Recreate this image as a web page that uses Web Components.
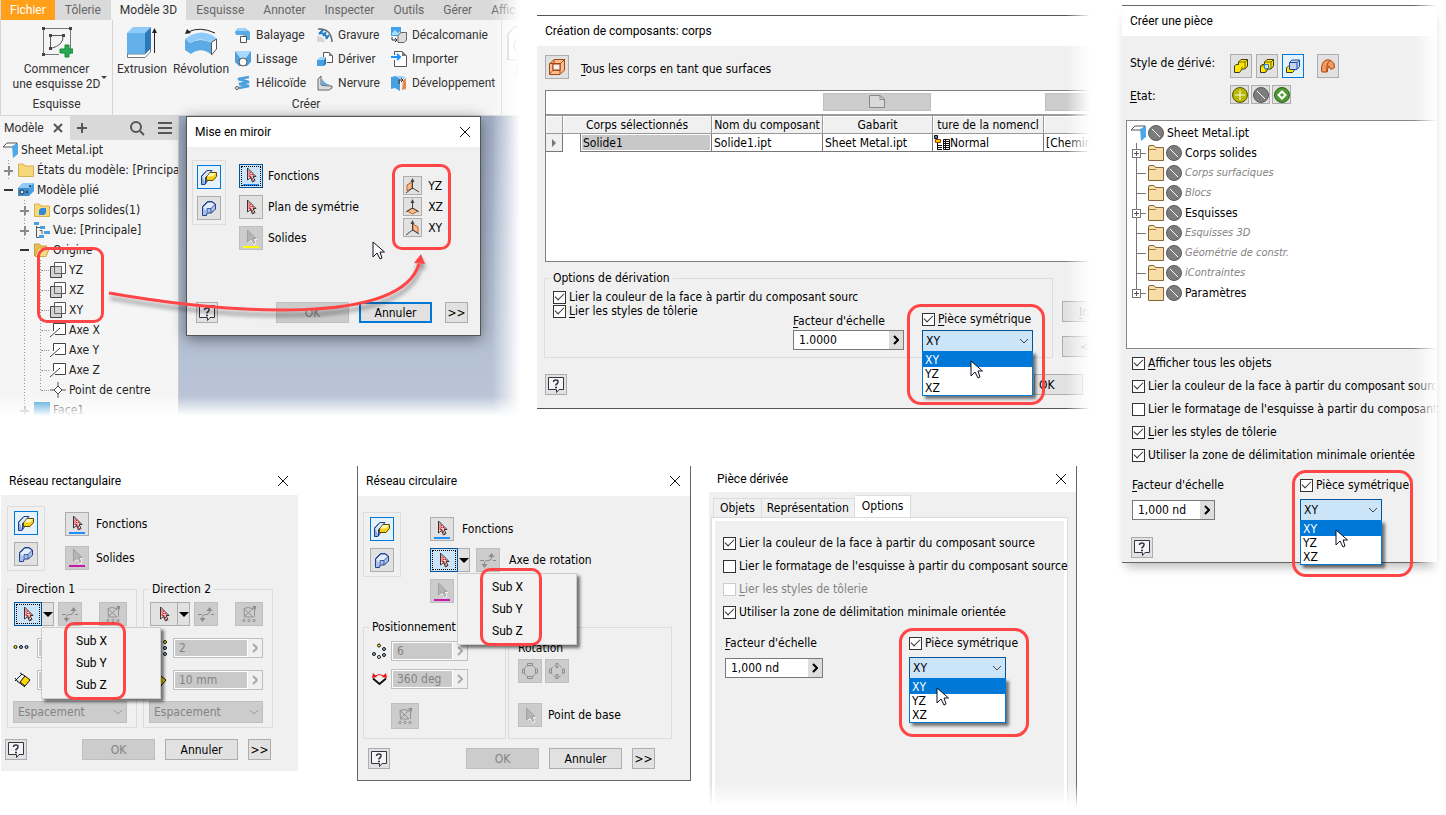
<!DOCTYPE html>
<html lang="fr">
<head>
<meta charset="utf-8">
<title>Pièce symétrique</title>
<style>
  body {
    margin: 0;
    background: #fff;
    color: #000;
    font: 12px/14px "DejaVu Sans Condensed", "DejaVu Sans", sans-serif;
  }
  u { text-underline-offset: 2px; }
</style>
</head>
<body>
<help-board></help-board>

<script>
  const UI_FONT = 'Roboto, "Open Sans", sans-serif';

  // name: [width, height, markup]
  const ICONS = {
    close: [12, 12, '<path d="M1 1L11 11M11 1L1 11" stroke="#111" fill="none"/>'],
    cross: [10, 10, '<path d="M1 1L9 9M9 1L1 9" stroke="#555" stroke-width="2" fill="none"/>'],
    plus: [10, 10, '<path d="M5 0V10M0 5H10" stroke="#555" stroke-width="2"/>'],
    search: [16, 16, '<circle cx="7" cy="7" r="5" fill="none" stroke="#555" stroke-width="2"/><path d="M11 11L15 15" stroke="#555" stroke-width="2"/>'],
    menu: [16, 14, '<path d="M1 2H15M1 7H15M1 12H15" stroke="#555" stroke-width="2"/>'],
    chevron: [10, 6, '<path d="M1 1L5 5L9 1" fill="none" stroke="currentColor"/>'],
    arrow: [6, 10, '<path d="M1 1L5 5L1 9" fill="none" stroke="currentColor" stroke-width="2"/>'],
    cursor: [14, 20, '<path d="M1 1V16L5 12L8 18L10 17L8 11H12.500Z" fill="#fff" stroke="#112"/>'],
    help: [18, 18, '<path d="M1.500 1.500H16.500V13.500H12L9.500 16.500V13.500H1.500Z" fill="#f4f4f4" stroke="#334"/><path d="M6.500 6Q6.500 4 9 4T11 6T9 8.500V9.500" fill="none" stroke="#334" stroke-width="1.500"/><path d="M8 11.500H10" stroke="#334" stroke-width="1.500"/>'],

    sketch: [32, 32, '<path d="M2.500 2.500H29.500V28M2.500 2.500V28.500H18" fill="none" stroke="#777"/><path d="M22 9.500H9.500V22M22 9.500Q23 19 10 22.500" fill="none" stroke="#555"/><g fill="#444"><path d="M1 1h3v3H1zM28 1h3v3h-3zM1 27h3v3H1zM8 8h3v3H8zM21 8h3v3h-3zM8 21h3v3H8z"/></g><path d="M24 19h4v4h4v4h-4v4h-4v-4h-5v-4h5z" fill="#2aa952" stroke="#168a3c"/>'],
    extrude: [31, 32, '<path d="M1.500 28V31.500H19L24.500 26V22L19 28Z" fill="#fff" stroke="#777"/><path d="M1 7L7 1H25L19 7Z" fill="#8ecbfb"/><path d="M1 7H19V28H1Z" fill="#64b0ea"/><path d="M19 7L25 1V22L19 28Z" fill="#2c78b8"/><path d="M28.500 27V5" stroke="#222"/><path d="M26 7L28.500 2L31 7Z" fill="#222"/>'],
    revolve: [34, 32, '<path d="M4 6Q16 0 31 7" fill="none" stroke="#222"/><path d="M1 8L3 3L7 7Z" fill="#222"/><path d="M1 13L7 9Q17 4 28 9L33 13L28 17Q16 10 6 17Z" fill="#8ecbfb"/><path d="M1 13L6 17Q16 11 28 17V29Q17 20 7 28L1 24Z" fill="#5aaae6"/><path d="M27.500 16.500L32.500 13V23L27.500 29Z" fill="#fff" stroke="#555"/>'],
    sweep: [16, 16, '<path d="M0 5L3 1H10L15 5V13H10L8 8H1Z" fill="#5aaae6"/><path d="M3 1H10L13 4H2Z" fill="#9bd3ff"/><path d="M5.500 9.500h6v6h-6z" fill="#fff" stroke="#555"/>'],
    loft: [16, 16, '<path d="M0 0H16V11L12 15H4L0 11Z" fill="#4f9fdc"/><path d="M0 0H16L11 7H5Z" fill="#a8d9ff"/><circle cx="8" cy="11" r="4" fill="#fff" stroke="#555"/>'],
    coil: [16, 16, '<path d="M14 2L3 4L14 7L4 9L14 11L4 13" fill="none" stroke="#4a9fe0" stroke-width="2.500"/><circle cx="2" cy="13" r="1.500" fill="#fff" stroke="#555"/>'],
    emboss: [16, 16, '<path d="M1 2Q14 1 15 15" fill="none" stroke="#666" stroke-width="1.500"/><path d="M0 9Q7 9 8 15H0Z" fill="#d5d5d5"/><path d="M2 7L6 3M6 9L9 5M9 12L12 8M3 6Q9 6 10 12" fill="none" stroke="#1d7cc9" stroke-width="2"/>'],
    derive: [16, 16, '<path d="M6.500 6V1.500H12L15.500 5V11.500H10" fill="#fff" stroke="#555"/><path d="M12 1V5H16Z" fill="#777"/><path d="M0 9L3 6H9L7 9Z" fill="#9bd3ff"/><path d="M0 9H7V15H0Z" fill="#4a9fe0"/><path d="M7 9L9 6V13L7 15Z" fill="#2c78b8"/>'],
    rib: [16, 16, '<path d="M1 14V4L4 1V10Q8 11 15 11V13L12 15H1Z" fill="#ddd" stroke="#666"/><path d="M5 3Q6 8 13 10L5 10Z" fill="#5aaae6"/>'],
    decal: [16, 16, '<path d="M0 0h10v9H0z" fill="#45a0ea"/><path d="M1 6L4 3L7 6L9 4V8H1Z" fill="#a9dcff"/><path d="M7 8.500L10 5.500H15.500V13L13 15.500H7Z" fill="#ddd" stroke="#666"/><path d="M1 10V13H5M4 11L6 13L4 15" fill="none" stroke="#333"/>'],
    import: [16, 16, '<path d="M3.500 4V.500H11L15.500 5V15.500H3.500V9" fill="#fff" stroke="#555"/><path d="M11 0V5H16Z" fill="#777"/><path d="M0 6H9M6 3L9 6L6 9" fill="none" stroke="#1e90ff" stroke-width="2"/>'],
    unwrap: [16, 16, '<path d="M0 2L5 1L9 4V16L4 13L0 14Z" fill="#4a9fe0"/><path d="M9 4L5 1H12L15 3Z" fill="#9bd3ff"/><path d="M12 5L15 3V14L11 15Z" fill="#e58a4c"/><path d="M8 9V5H12M10 3L12 5L10 7" fill="none" stroke="#333"/>'],
    shell: [30, 34, '<path d="M1 8L7 1H30V34H1Z" fill="#fff" stroke="#888"/><circle cx="16" cy="20" r="9" fill="none" stroke="#999"/>'],

    part: [16, 16, '<path d="M1 5L5 1H15L11 5Z" fill="#fff" stroke="#555"/><path d="M10 4L16 1V12L11 16Z" fill="#50a8e8"/>'],
    folder: [16, 16, '<path d="M.500 14.500V2H5.500L7 4H15.500V14.500Z" fill="#f5d77c" stroke="#d8b04c"/>'],
    model: [16, 16, '<path d="M0 6L5 1H16V9L11 14H0Z" fill="#4a9fe0"/><path d="M0 6L5 1H16L11 6Z" fill="#8ecbfb"/><path d="M0 6h11v8H0z" fill="#3f8cc9"/><circle cx="4" cy="10" r="2" fill="#cfe8fb" stroke="#234"/><circle cx="9" cy="10" r="1" fill="#234"/><circle cx="12" cy="4" r="1" fill="#234"/>'],
    bodies: [16, 16, '<path d="M.500 14.500V2H5.500L7 4H15.500V14.500Z" fill="#f5d77c" stroke="#d8b04c"/><path d="M5 8L7 6H12V11L10 13H5Z" fill="#2f8bd6"/>'],
    view: [16, 16, '<path d="M2.500 4V15.500H5M2.500 5.500H7M5.500 8.500H8V12" fill="none" stroke="#555"/><g fill="#4a9fe0"><path d="M0 0h5v3H0zM6 4h5v3H6zM10 9h6v3h-6zM5 13h5v3H5z"/></g>'],
    open: [16, 16, '<path d="M.500 14V2H5.500L7 4H12.500V7" fill="#e9bf55" stroke="#c79d3a"/><path d="M1 14.500L4 6H15.500L12 14.500Z" fill="#f7dc86" stroke="#d0a744"/>'],
    plane: [16, 16, '<path d="M4.500 .500H15.500V11.500H4.500Z" fill="#fff" stroke="#555"/><path d="M.500 4.500H11.500V15.500H.500Z" fill="#ccc" fill-opacity=".8" stroke="#444"/><path d="M4.500 4.500H11.500V11.500H4.500Z" fill="none" stroke="#666"/>'],
    axis: [16, 16, '<path d="M3.500 9V1.500H15.500V12.500H5" fill="#fff" stroke="#444"/><path d="M0 15L10 6" stroke="#444"/>'],
    point: [16, 16, '<path d="M8 0V16M0 8H16" stroke="#555"/><path d="M8 4L12 8L8 12L4 8Z" fill="#fff" stroke="#444"/>'],
    face: [16, 16, '<path d="M0 0h16v16H0z" fill="#3c9ad8"/>'],

    feature: [18, 18, '<path d="M1.500 16.500V8L7 2.500H11L8 8V12L5 16.500Z" fill="#8fa9da" stroke="#1f3f8f"/><path d="M2 8L7 2.500H12L8 7L5.500 9.500V16" fill="#dbe6f8" stroke="#1f3f8f"/><path d="M6.500 9L10 4.500H16.500V8.500L13 12.500H6.500Z" fill="#f7cf17" stroke="#5b4a00"/><path d="M7 8.500L10 5H16L13 8.500Z" fill="#fff8b0"/>'],
    solid: [18, 18, '<path d="M2.500 16.500V7.500L7.500 2.500H12L15.500 5V10L11.500 14H7L6.500 16.500Z" fill="#a9c0e9" stroke="#1f3f8f"/><path d="M3 8L8 3H12L15 5.500L11 9.500H7V13" fill="#e2ecfb" stroke="#1f3f8f" stroke-width=".800"/><path d="M11 9.500V14" stroke="#1f3f8f" stroke-width=".800"/>'],
    pick: [16, 17, '<path d="M4.500 1V13L7.500 10.500L9.500 15L12 13.500L10 9.500H13Z" fill="#fff" stroke="#333"/><path d="M5.500 3.500L11 9M5.500 5.500L9 9M5.500 7.500L9 11L10.500 14M5.500 9.500L7 10" stroke="#d81818" stroke-width="1.200" stroke-dasharray="1.500 .800"/>'],
    pickOff: [16, 17, '<path d="M4.500 1V13L7.500 10.500L9.500 15L12 13.500L10 9.500H13Z" fill="#b4b4b4" stroke="#a0a0a0"/><path d="M5.500 13.500L8 11.500L10.500 16L13 14.500L11.500 10.500H14" fill="none" stroke="#f4f4f4"/>'],
    axisYZ: [15, 16, '<path d="M2 7L7 4V10L2 13Z" fill="#f7b98d" stroke="#c0622a"/><path d="M7.500 11V2M7.500 10L1 15M7.500 10L14 14" fill="none" stroke="#444"/><path d="M5.500 4L7.500 0L9.500 4Z" fill="#444"/>'],
    axisXZ: [15, 16, '<path d="M2 12L7.500 9L13 12L7.500 15Z" fill="#f7b98d" stroke="#c0622a"/><path d="M7.500 10V2M7.500 9L1 13M7.500 9L14 13" fill="none" stroke="#444"/><path d="M5.500 4L7.500 0L9.500 4Z" fill="#444"/>'],
    axisXY: [15, 16, '<path d="M8 4L13 7V13L8 10Z" fill="#f7b98d" stroke="#c0622a"/><path d="M7.500 11V2M7.500 10L1 15M7.500 10L14 14" fill="none" stroke="#444"/><path d="M5.500 4L7.500 0L9.500 4Z" fill="#444"/>'],
    flip: [18, 18, '<path d="M1 9.500H5M14 9.500H17M5.500 14V11.500Q5.500 9.500 9 9.500T12.500 7V5" fill="none" stroke="#8c8c8c"/><path d="M9.500 6L12.500 2L15.500 6ZM2.500 13L5.500 17L8.500 13Z" fill="#8c8c8c"/>'],
    grid: [18, 18, '<path d="M4 12L15 1.500M4 3.500L13 12H4.500ZM4 3.500L8 2.500L14.500 4V12" fill="none" stroke="#929292"/><path d="M12 1H16V5Z" fill="#8c8c8c"/><g fill="none" stroke="#929292"><circle cx="4" cy="15.500" r="1.200"/><circle cx="9" cy="15.500" r="1.200"/><circle cx="14" cy="15.500" r="1.200"/></g>'],
    across: [16, 16, '<g stroke="#111"><circle cx="2.500" cy="7" r="1.500" fill="#ffe000"/><circle cx="8" cy="7" r="1.500" fill="#8db8e8"/><circle cx="13.500" cy="7" r="1.500" fill="#8db8e8"/></g>'],
    down: [18, 16, '<g stroke="#111"><circle cx="16" cy="2" r="1.500" fill="#ffe000"/><circle cx="16" cy="8" r="1.500" fill="#8db8e8"/><circle cx="16" cy="14" r="1.500" fill="#8db8e8"/></g>'],
    gap: [18, 16, '<path d="M7 10L12 4L17 8L12 14Z" fill="#ffd800" stroke="#111"/><path d="M2 9L9 2M2 6L5 10M7 1L12 4M4 9L12 15" fill="none" stroke="#111"/>'],
    ring: [16, 16, '<g stroke="#111"><circle cx="8" cy="2.500" r="1.500" fill="#ffe000"/><circle cx="13" cy="6" r="1.500" fill="#8db8e8"/><circle cx="13" cy="12" r="1.500" fill="#8db8e8"/><circle cx="8" cy="14" r="1.500" fill="#fff"/><circle cx="3" cy="11" r="1.500" fill="#8db8e8"/></g>'],
    angle: [17, 14, '<path d="M2 6.500L8.500 12L15 6.500" fill="none" stroke="#111" stroke-width="2"/><path d="M4 4Q8 1 13 4" fill="none" stroke="#e11"/><path d="M1 6L2 1L6 5ZM16 6L15 1L11 5Z" fill="#e11"/>'],
    turnA: [18, 18, '<circle cx="9" cy="9" r="6" fill="none" stroke="#999"/><g fill="#ccc" stroke="#8c8c8c"><path d="M6.500 1.500h5v2h-5zM6.500 14.500h5v2h-5zM1.500 7h2v4h-2zM14.500 7h2v4h-2z"/></g>'],
    turnB: [18, 18, '<circle cx="9" cy="9" r="6" fill="none" stroke="#999" stroke-dasharray="3 2"/><g fill="#ccc" stroke="#8c8c8c"><path d="M8 1.500h2v4h-2zM8 12.500h2v4h-2zM1.500 7h2v4h-2zM14.500 7h2v4h-2z"/></g>'],

    surface: [18, 18, '<path d="M1.500 6L6 1.500H16.500V12L12 16.500H1.500Z" fill="#fbbd91" stroke="#a8430e"/><path d="M1.500 5.500H12V16M12 6L16.500 1.500M5 5.500V12.500H12M1.500 16L5 12.500M6 2V5" fill="none" stroke="#a8430e"/><path d="M5 6H12V12H5Z" fill="#f4f0ee" stroke="#a8430e"/>'],
    merged: [16, 16, '<path d="M1.500 8L3 6.500H5.500V4L8 1.500H14.500V8L12 11H9L6.500 14.500H1.500Z" fill="#ffe800" stroke="#3d3a20"/><path d="M5.500 4H12V11M12 4L14.500 1.500M9 11V8.500" fill="none" stroke="#7a6a00"/>'],
    seams: [16, 16, '<path d="M1.500 8L3 6.500H5.500V4L8 1.500H14.500V8L12 11H9L6.500 14.500H1.500Z" fill="#ffe800" stroke="#3d3a20"/><path d="M5.500 4H12V11M12 4L14.500 1.500M1.500 8H7V14" fill="none" stroke="#7a6a00"/><path d="M5.500 6.500H9.500V10.500H5.500Z" fill="#cfe4fa" stroke="#2a7fd0"/>'],
    multi: [16, 16, '<path d="M1.500 10L4 7.500H9V13L7.500 14.500H1.500Z" fill="#ffe800" stroke="#3d3a20"/><path d="M4.500 4.500L7 2H14.500V8.500L12 11.500H4.500Z" fill="#c3d5f6" stroke="#24479b"/><path d="M4.500 4.500H12V11M12 4.500L14.500 2" fill="none" stroke="#24479b"/>'],
    sheet: [16, 16, '<path d="M1.500 12Q1.500 5 5 2.500Q8 1 11 2.500Q15 5 14.500 9.500L11 11.500L8.500 8L7 14L2 14Z" fill="#f39a5e" stroke="#a8430e"/><path d="M7 14Q6 6 9.500 3" fill="none" stroke="#a8430e"/>'],
    add: [16, 16, '<circle cx="8" cy="8" r="7.500" fill="#b9b800" stroke="#555400"/><path d="M8 3V13M3 8H13" stroke="#fff"/>'],
    none: [16, 16, '<circle cx="8" cy="8" r="7.500" fill="#7c7c7c" stroke="#5a5a5a"/><path d="M4 4L12 12" stroke="#fff"/>'],
    diamond: [16, 16, '<circle cx="8" cy="8" r="7.500" fill="#4f9a30" stroke="#2c6018"/><path d="M8 4.500L11.500 8L8 11.500L4.500 8Z" fill="#4f9a30" stroke="#fff" stroke-width="2"/>'],
    tan: [16, 16, '<path d="M.500 15.500V2Q.500 .500 2 .500H6L7.500 2.500H15.500V15.500Z" fill="#f8dda6" stroke="#85623a"/><path d="M1 4.500H8" stroke="#85623a" stroke-width=".800"/>'],
    sheetFile: [16, 14, '<path d="M.500 .500H11L15.500 4V12.500H.500Z" fill="#d9d9d9" stroke="#888"/><path d="M11 1V4.500H15" fill="none" stroke="#888"/>'],
    bom: [16, 16, '<path d="M.500 .500h3v3h-3z" fill="#58a" stroke="#111"/><path d="M1.500 4.500h5v3h-5z" fill="#ffc400" stroke="#a33a00"/><path d="M3.500 8V15M4 10.500H8M4 12.500H8M4 14.500H8" stroke="#111"/><path d="M9.500 4.500H15.500V14.500H9.500ZM9 6.500H16M9 8.500H16M9 10.500H16M9 12.500H16M11.500 5V15" fill="none" stroke="#111"/>']
  };

  const icon = name => {
    const [w, h, body] = ICONS[name];
    return `<svg width="${w}" height="${h}" viewBox="0 0 ${w} ${h}" aria-hidden="true">${body}</svg>`;
  };

  const BASE = `
    *, ::before, ::after { box-sizing: border-box; }
    :host { display: block; }
    :host([hidden]) { display: none; }
    svg { display: block; flex: none; }
    button, input, select { margin: 0; font: inherit; color: inherit; border-radius: 0; }
    button { padding: 0; }
    u { text-underline-offset: 2px; }
  `;

  class UiPart extends HTMLElement {
    connectedCallback() {
      if (this.shadowRoot) return;
      const shadow = this.attachShadow({ mode: "open" });
      shadow.innerHTML = `<style>${BASE}${this.styles()}</style>${this.markup()}`;
    }
    attr(name, fallback = "") {
      return this.getAttribute(name) ?? fallback;
    }
    styles() { return ""; }
    markup() { return "<slot></slot>"; }
  }

  const define = (tag, styles, markup) => {
    customElements.define(tag, class extends UiPart {
      styles() { return styles; }
      markup() { return markup ? markup(this) : "<slot></slot>"; }
    });
  };

  /* ---------- controls ---------- */

  const TOOL_CSS = `
    button {
      display: flex; flex-direction: column; align-items: center; justify-content: center;
      width: var(--w, 24px); height: var(--h, 24px);
      background: #e1e1e1; border: 1px solid #adadad;
    }
    button.on { background: #e5f1fb; border-color: #0078d7; }
    button.focus { background: #cce4f7; border-color: #005499; outline: 1px dotted #000; outline-offset: -3px; }
    button.off { background: #ccc; border-color: #bfbfbf; color: #838383; }
    button i { width: 16px; height: 2px; background: var(--bar); }
  `;

  define("tool-button", `:host { flex: none; } ${TOOL_CSS}`, el => `
    <button class="${el.attr("state")}" aria-label="${el.attr("label", el.attr("icon"))}">
      ${icon(el.attr("icon"))}
    </button>`);

  define("pick-row", `
    :host { display: flex; align-items: center; gap: var(--space, 6px); white-space: nowrap; }
    ${TOOL_CSS}
  `, el => `
    <button id="pick" class="${el.attr("state")}">
      ${icon(el.attr("icon", "pick"))}${el.hasAttribute("bar") ? `<i style="--bar:${el.attr("bar")}"></i>` : ""}
    </button>
    <label for="pick"><slot></slot></label>`);

  define("push-button", `
    :host { flex: none; }
    button { width: var(--w, 73px); height: 21px; background: #e1e1e1; border: 1px solid #adadad; }
    .off { background: #ccc; border-color: #bfbfbf; color: #838383; }
    .main { border: 2px solid #0078d7; }
  `, el => `<button class="${el.attr("state")}"><slot></slot></button>`);

  define("help-button", `
    :host { flex: none; }
    button { display: flex; align-items: center; justify-content: center; width: 22px; height: 21px; background: #e1e1e1; border: 1px solid #adadad; }
  `, () => `<button aria-label="Aide">${icon("help")}</button>`);

  define("check-line", `
    label { display: flex; align-items: center; gap: 3px; height: 14px; white-space: nowrap; }
    input {
      appearance: none; flex: none; width: 13px; height: 13px;
      background: #fff; border: 1px solid #333; display: grid; place-items: center;
    }
    input:checked::before {
      content: ""; width: 9px; height: 5px; margin-bottom: 3px;
      border: solid #333; border-width: 0 0 1px 1px; transform: rotate(-45deg);
    }
    input:disabled { border-color: #ccc; }
    input:disabled + span { color: #838383; }
  `, el => `
    <label><input type="checkbox" ${el.hasAttribute("on") ? "checked" : ""} ${el.hasAttribute("off") ? "disabled" : ""}><span><slot></slot></span></label>`);

  define("value-box", `
    .box { display: flex; height: 20px; background: #fff; border: 1px solid #7a7a7a; }
    input { flex: 1; min-width: 0; width: 0; border: 0; padding: 0 5px; background: #fff; }
    button { width: 14px; border: 0; background: #ddd; display: grid; place-items: center; }
    .off { border-color: #bfbfbf; color: #838383; }
    .off input { margin: 1px; background: #c9c9c9; padding: 0 4px; }
    .off button { background: #f0f0f0; color: #aaa; }
    label { display: block; margin-bottom: var(--gap, 8px); white-space: nowrap; }
  `, el => {
    const off = el.hasAttribute("off");
    return `
      ${off ? "" : `<label for="value"><slot></slot></label>`}
      <div class="box ${off ? "off" : ""}">
        <input id="value" value="${el.attr("value")}" aria-label="${el.attr("label", "Valeur")}" ${off ? "disabled" : ""}>
        <button aria-label="Options">${icon("arrow")}</button>
      </div>`;
  });

  define("off-combo", `
    div { position: relative; color: #999; }
    select { appearance: none; display: block; width: 100%; height: 22px; padding: 0 4px; background: #ccc; border: 1px solid #bfbfbf; color: #838383; opacity: 1; }
    svg { position: absolute; right: 4px; top: 8px; }
  `, el => `<div><select aria-label="Mode" disabled><option>${el.attr("value")}</option></select>${icon("chevron")}</div>`);

  // check box, open plane list and the red frame around them
  define("plane-picker", `
    :host { position: relative; z-index: 2; width: var(--w); }
    .frame {
      position: absolute; inset: -8px var(--right) auto var(--left); height: var(--fh, 107px);
      border: 3px solid #ff4545; border-radius: 14px; pointer-events: none;
    }
    .combo { position: relative; margin-top: var(--gap, 7px); }
    select {
      appearance: none; display: block; width: 100%; height: 22px; padding: 0 3px;
      background: #cce4f7; border: 1px solid #005499;
    }
    .combo > svg { position: absolute; right: 4px; top: 8px; color: #444; }
    ul {
      position: absolute; top: 21px; left: 0; right: 0; margin: 0; padding: 0;
      list-style: none; background: #fff; border: 1px solid #0078d7; box-shadow: 3px 3px 3px #0008;
    }
    li { padding: 0 2px; }
    li.hot { background: #0078d7; color: #fff; padding-top: 1px; }
    .mouse { position: absolute; left: var(--mouse, 48px); top: 30px; }
  `, () => `
    <check-line on><slot>Pièce symétrique</slot></check-line>
    <div class="combo">
      <select aria-label="Plan de symétrie"><option>XY</option><option>YZ</option><option>XZ</option></select>
      ${icon("chevron")}
      <ul><li class="hot">XY</li><li>YZ</li><li>XZ</li></ul>
      <div class="mouse">${icon("cursor")}</div>
    </div>
    <div class="frame"></div>`);

  // arrow button with its drop-down menu opened
  define("split-pick", `
    :host { position: relative; display: flex; }
    ${TOOL_CSS}
    .pick { width: 28px; }
    .drop { width: 12px; border-left: 0; }
    .drop::before { content: ""; border: 5px solid transparent; border-top-color: #000; border-bottom: 0; }
    .menu {
      position: absolute; z-index: 3; left: 27px; top: 25px; width: 120px; padding: 2px 0;
      background: #f2f2f2; border: 1px solid #ccc; box-shadow: 3px 3px 3px #0008; font-family: ${UI_FONT};
    }
    .menu button { display: block; width: 100%; height: 22px; padding-left: 34px; border: 0; background: none; text-align: left; }
    .menu::after {
      content: ""; position: absolute; left: 22px; top: -6px; width: 62px; height: 78px;
      border: 3px solid #ff4545; border-radius: 10px; pointer-events: none;
    }
  `, el => `
    <button class="pick ${el.attr("state")}" aria-label="Sélectionner">${icon("pick")}</button>
    <button class="drop" aria-label="Axes"></button>
    ${el.hasAttribute("opened") ? `<div class="menu"><button>Sub X</button><button>Sub Y</button><button>Sub Z</button></div>` : ""}`);

  define("mode-toggle", `
    :host { flex: none; align-self: flex-start; border: 1px solid #dcdcdc; padding: 4px var(--side, 6px); }
    tool-button + tool-button { margin-top: 7px; }
  `, () => `
    <tool-button icon="feature" state="on" label="Fonctions"></tool-button>
    <tool-button icon="solid" label="Solides"></tool-button>`);

  define("group-box", `
    fieldset { height: 100%; min-width: 0; margin: 0; border: 1px solid #dcdcdc; padding: var(--pad); }
    legend { padding: 0 3px; margin-left: var(--shift, 0); white-space: nowrap; }
  `, el => `<fieldset>${el.hasAttribute("legend") ? `<legend>${el.attr("legend")}</legend>` : ""}<slot></slot></fieldset>`);

  /* ---------- windows ---------- */

  define("tool-window", `
    :host { position: relative; background: #f0f0f0; }
    header {
      display: flex; align-items: center; justify-content: space-between;
      height: var(--bar, 30px); padding: 0 9px 0 8px; background: #fff; font-family: ${UI_FONT};
    }
    h2 { margin: 0; font-size: 12px; font-weight: 400; white-space: nowrap; }
    header button { border: 0; background: none; }
    .body { padding: var(--pad); }
    :host([fade])::after {
      content: ""; position: absolute; z-index: 4; inset: -1px 0 -1px auto; width: 24px;
      background: linear-gradient(90deg, #fff0, #fff); pointer-events: none;
    }
  `, el => `
    <header><h2>${el.attr("heading")}</h2>${el.hasAttribute("fade") ? "" : `<button aria-label="Fermer">${icon("close")}</button>`}</header>
    <div class="body"><slot></slot></div>`);

  define("window-footer", `
    :host { display: flex; gap: 10px; }
    help-button { margin-right: auto; }
    .more { --w: 23px; margin-left: var(--more, 0); }
  `, el => `
    <help-button></help-button>
    <push-button state="off">OK</push-button>
    <push-button state="${el.attr("cancel")}">Annuler</push-button>
    <push-button class="more">&gt;&gt;</push-button>`);

  define("mirror-window", `
    tool-window { --pad: 13px 12px 12px 5px; border: 1px solid #555; box-shadow: 0 3px 14px #0007; }
    .main { display: flex; align-items: flex-start; }
    mode-toggle { --side: 4px; }
    .picks { display: grid; gap: 7px; padding: 4px 0 0 13px; --space: 5px; }
    .planes {
      display: grid; gap: 2px; margin: 4px 17px 0 auto; padding: 9px 5px 10px 8px;
      border: 3px solid #ff4545; border-radius: 10px;
    }
    pick-row.plane { --w: 19px; --h: 19px; }
    .mouse { position: absolute; left: 185px; top: 124px; }
    window-footer { --more: 3px; margin: 52px 0 0 4px; }
  `, () => `
    <tool-window heading="Mise en miroir">
      <div class="main">
        <mode-toggle></mode-toggle>
        <div class="picks">
          <pick-row state="focus" bar="#1e90ff">Fonctions</pick-row>
          <pick-row>Plan de symétrie</pick-row>
          <pick-row state="off" icon="pickOff" bar="#ff0">Solides</pick-row>
        </div>
        <div class="planes">
          <pick-row class="plane" icon="axisYZ">YZ</pick-row>
          <pick-row class="plane" icon="axisXZ">XZ</pick-row>
          <pick-row class="plane" icon="axisXY">XY</pick-row>
        </div>
      </div>
      <window-footer cancel="main"></window-footer>
      <div class="mouse">${icon("cursor")}</div>
    </tool-window>`);

  define("direction-group", `
    group-box { --pad: 6px 9px 4px 5px; }
    .tools { display: flex; padding-left: 1px; }
    .flip { margin-left: 4px; }
    .grid { --w: 28px; margin-left: auto; }
    .field { display: grid; grid-template-columns: 24px 1fr; align-items: center; margin-top: 12px; }
    off-combo { margin-top: 11px; }
  `, el => `
    <group-box legend="${el.attr("legend")}">
      <div class="tools">
        <split-pick state="${el.attr("state")}" ${el.hasAttribute("opened") ? "opened" : ""}></split-pick>
        <tool-button class="flip" icon="flip" state="off"></tool-button>
        <tool-button class="grid" icon="grid" state="off"></tool-button>
      </div>
      <div class="field">${icon(el.attr("icon"))}<value-box off value="2"></value-box></div>
      <div class="field">${icon("gap")}<value-box off value="10 mm"></value-box></div>
      <off-combo value="Espacement"></off-combo>
    </group-box>`);

  define("rect-window", `
    tool-window { --bar: 29px; --pad: 11px 25px 11px 6px; }
    .top { display: flex; gap: 20px; }
    .picks { display: grid; gap: 7px; padding-top: 5px; --space: 7px; }
    .pair { display: grid; grid-template-columns: 1fr 1fr; gap: 6px; margin: 11px 0; }
    window-footer { margin: 0 2px 0 -2px; }
  `, () => `
    <tool-window heading="Réseau rectangulaire">
      <div class="top">
        <mode-toggle></mode-toggle>
        <div class="picks">
          <pick-row bar="#1e90ff">Fonctions</pick-row>
          <pick-row state="off" icon="pickOff" bar="#c71aa8">Solides</pick-row>
        </div>
      </div>
      <div class="pair">
        <direction-group legend="Direction 1" icon="across" state="focus" opened></direction-group>
        <direction-group legend="Direction 2" icon="down"></direction-group>
      </div>
      <window-footer></window-footer>
    </tool-window>`);

  define("circular-window", `
    tool-window { --bar: 30px; --pad: 16px 18px 11px 5px; border: solid #666; border-width: 0 1px 1px; }
    .top { display: flex; gap: 29px; }
    .picks { display: grid; gap: 7px; padding-top: 5px; --space: 8px; }
    .axis { display: flex; align-items: center; gap: 6px; }
    .axis span { margin-left: 3px; }
    .pair { display: grid; grid-template-columns: 143fr 164fr; gap: 2px; margin: 17px 0 9px; }
    .left { --pad: 7px 37px 9px 7px; --shift: -2px; }
    .right { --pad: 13px 9px 11px; margin-top: 7px; }
    .field { display: grid; grid-template-columns: 20px 1fr; align-items: center; margin-bottom: 8px; }
    .grid { --w: 28px; --h: 26px; margin: 14px 0 0 20px; }
    .turn { display: flex; gap: 3px; margin: 4px 0 20px; }
    window-footer { margin: 0 17px 0 5px; }
  `, () => `
    <tool-window heading="Réseau circulaire">
      <div class="top">
        <mode-toggle></mode-toggle>
        <div class="picks">
          <pick-row bar="#1e90ff">Fonctions</pick-row>
          <div class="axis">
            <split-pick state="focus" opened></split-pick>
            <tool-button icon="flip" state="off"></tool-button>
            <span>Axe de rotation</span>
          </div>
          <pick-row state="off" icon="pickOff" bar="#c71aa8"></pick-row>
        </div>
      </div>
      <div class="pair">
        <group-box class="left" legend="Positionnement">
          <div class="field">${icon("ring")}<value-box off value="6"></value-box></div>
          <div class="field">${icon("angle")}<value-box off value="360 deg"></value-box></div>
          <tool-button class="grid" icon="grid" state="off"></tool-button>
        </group-box>
        <group-box class="right">
          <span>Rotation</span>
          <div class="turn">
            <tool-button icon="turnA" state="off"></tool-button>
            <tool-button icon="turnB" state="off"></tool-button>
          </div>
          <pick-row state="off" icon="pickOff">Point de base</pick-row>
        </group-box>
      </div>
      <window-footer></window-footer>
    </tool-window>`);

  define("derived-window", `
    tool-window { --bar: 26px; --pad: 3px 8px 0 2px; border-right: 1px solid #666; }
    .tabs { display: flex; align-items: flex-end; padding-left: 2px; }
    .tabs button { height: 19px; padding: 0 6px; background: #f0f0f0; border: 1px solid #dcdcdc; border-bottom: 0; }
    .tabs button + button { border-left: 0; padding: 0 5px; }
    .tabs .on { height: 22px; padding: 0 7px 2px; background: #fff; }
    .panel { border: 1px solid #dcdcdc; border-bottom: 0; box-shadow: inset 0 0 0 3px #fff; padding: 18px 0 128px 11px; }
    .checks { display: grid; gap: 9px; }
    .row { display: flex; justify-content: space-between; margin: 17px 61px 0 2px; }
    value-box { width: 98px; }
    plane-picker { --w: 97px; --left: -10px; --right: -23px; --fh: 109px; --mouse: 27px; }
    .haze { position: absolute; z-index: 4; inset: auto -2px 0 0; height: 24px; background: linear-gradient(#fff0, #fff); }
  `, () => `
    <tool-window heading="Pièce dérivée">
      <div class="tabs"><button>Objets</button><button>Représentation</button><button class="on">Options</button></div>
      <div class="panel">
        <div class="checks">
          <check-line on>Lier la couleur de la face à partir du composant source</check-line>
          <check-line>Lier le formatage de l'esquisse à partir du composant source</check-line>
          <check-line off><u>L</u>ier les styles de tôlerie</check-line>
          <check-line on>Utiliser la zone de délimitation minimale orientée</check-line>
        </div>
        <div class="row">
          <value-box value="1,000 nd"><u>F</u>acteur d'échelle</value-box>
          <plane-picker></plane-picker>
        </div>
      </div>
      <div class="haze"></div>
    </tool-window>`);

  define("components-window", `
    tool-window { --pad: 9px 0 13px 8px; border: solid #555; border-width: 1px 0; }
    .all { display: flex; align-items: center; gap: 12px; margin-bottom: 11px; }
    .all span { padding-top: 3px; }
    .list { height: 172px; overflow: hidden; background: #fff; border: solid #7f7f7f; border-width: 1px 0 1px 1px; }
    .strip { display: grid; grid-template-columns: 277px 108px 114px 1fr; height: 25px; padding-top: 2px; border-bottom: 2px solid #999; }
    .strip button { height: 18px; border: 1px solid #bfbfbf; background: #ccc; display: grid; place-items: center; }
    .strip .last { grid-column: 4; }
    table { width: 100%; table-layout: fixed; border-collapse: separate; border-spacing: 0; }
    th, td { height: 18px; padding: 0 2px; border: solid #777; border-width: 0 1px 1px 0; font-weight: 400; text-align: left; white-space: nowrap; }
    th:last-child, td:last-child { padding-right: 0; border-right: 0; }
    th { background: #f0f0f0; text-align: center; border-color: #999; box-shadow: inset 1px 1px #fff; }
    .mark { padding: 0; background: #f0f0f0; }
    .mark::before { content: ""; display: block; width: 0; margin-left: 6px; border: 4px solid transparent; border-left-color: #777; border-right: 0; }
    .indent { border-bottom: 0; }
    .name { background: #c8c8c8; box-shadow: inset 0 0 0 1px #fff; }
    .bom { display: flex; align-items: center; margin-left: -1px; }
    .middle { display: flex; gap: 9px; margin: 9px 0 0 -1px; }
    .middle group-box { flex: 1; min-width: 0; --pad: 5px 19px 5px 8px; --shift: -3px; }
    .row { display: flex; }
    .row value-box { width: 111px; margin: 10px 18px 0 auto; --gap: 2px; }
    plane-picker { margin-top: 8px; --w: 111px; --left: -15px; --right: -12px; --fh: 101px; --gap: 4px; }
    .side { width: 28px; padding-top: 30px; display: grid; gap: 14px; align-content: start; }
    .side button, .ok { height: 21px; border: 1px solid #adadad; background: #e1e1e1; text-align: left; }
    .side button { padding-right: 1px; color: #838383; border-right: 0; text-align: right; }
    .foot { display: flex; justify-content: space-between; margin: 16px 7px 0 0; }
    .ok { width: 49px; padding-left: 4px; }
  `, () => `
    <tool-window heading="Création de composants: corps" fade>
      <div class="all"><tool-button icon="surface"></tool-button><span><u>T</u>ous les corps en tant que surfaces</span></div>
      <div class="list">
        <div class="strip"><span></span><button aria-label="Gabarit">${icon("sheetFile")}</button><button class="last" aria-label="Chemin"></button></div>
        <table>
          <colgroup><col style="width:17px"><col style="width:18px"><col style="width:131px"><col style="width:111px"><col style="width:110px"><col style="width:111px"><col></colgroup>
          <thead><tr>
            <th></th><th colspan="2">Corps sélectionnés</th><th>Nom du composant</th><th>Gabarit</th>
            <th>ture de la nomencl</th><th></th>
          </tr></thead>
          <tbody><tr>
            <td class="mark"></td><td class="indent"></td><td class="name">Solide1</td><td>Solide1.ipt</td><td>Sheet Metal.ipt</td>
            <td><div class="bom">${icon("bom")}Normal</div></td><td>[Chemin</td>
          </tr></tbody>
        </table>
      </div>
      <div class="middle">
        <group-box legend="Options de dérivation">
          <check-line on>Lier la couleur de la face à partir du composant sourc</check-line>
          <div class="row">
            <check-line on><u>L</u>ier les styles de tôlerie</check-line>
            <value-box value="1.0000"><u>F</u>acteur d'échelle</value-box>
            <plane-picker><u>P</u>ièce symétrique</plane-picker>
          </div>
        </group-box>
        <div class="side"><button><u>I</u>n</button><button>&lt;</button></div>
      </div>
      <div class="foot"><help-button></help-button><button class="ok">OK</button></div>
    </tool-window>`);

  define("part-node", `
    :host { display: flex; align-items: center; gap: 2px; height: 20px; padding-left: 3px; white-space: nowrap; }
    .branch { position: relative; width: 16px; height: 20px; flex: none; background: linear-gradient(#777, #777) 6px 0 / 1px 100% no-repeat, linear-gradient(#777, #777) 6px 10px / 12px 1px no-repeat; }
    :host([last]) .branch { background-size: 1px 10px, 12px 1px; }
    button { display: grid; place-items: center; width: 9px; height: 9px; margin: 6px 0 0 2px; border: 1px solid #777; background: #fff; }
    button svg { width: 5px; height: 5px; }
    span { margin-left: 1px; }
    :host([empty]) span { color: #838383; font-style: italic; font-size: 11px; }
  `, el => `
    ${el.hasAttribute("root") ? "" : `<div class="branch">${el.hasAttribute("empty") ? "" : `<button aria-label="Développer">${icon("plus")}</button>`}</div>`}
    ${icon(el.attr("icon", "tan"))}${icon("none")}<span><slot></slot></span>`);

  define("part-window", `
    tool-window { --pad: 18px 0 4px 4px; border: solid #666; border-width: 1px 0; box-shadow: 0 8px 10px -4px #0004; }
    .tools { display: flex; gap: 4px; padding-left: 4px; --w: 22px; }
    .tools span { width: 96px; padding-top: 2px; }
    .tools .far { margin-left: 9px; }
    .state { --w: 19px; --h: 19px; gap: 2px; margin: 7px 0 16px; }
    .state span { width: 98px; padding-top: 4px; }
    .tree { height: 229px; padding-top: 2px; background: #fff; border: solid #828790; border-width: 1px 0 1px 1px; }
    .checks { display: grid; gap: 9px; margin: 7px 0 16px 6px; }
    .row { display: flex; margin-left: 6px; gap: 85px; }
    value-box { width: 83px; }
    plane-picker { --w: 82px; --left: -8px; --right: -31px; --mouse: 35px; }
    help-button { margin: 16px 0 0 5px; }
  `, () => `
    <tool-window heading="Créer une pièce" fade>
      <div class="tools">
        <span>Style de <u>d</u>érivé:</span>
        <tool-button icon="merged"></tool-button><tool-button icon="seams"></tool-button>
        <tool-button icon="multi" state="on"></tool-button><tool-button class="far" icon="sheet"></tool-button>
      </div>
      <div class="tools state">
        <span><u>E</u>tat:</span>
        <tool-button icon="add"></tool-button><tool-button icon="none"></tool-button><tool-button icon="diamond"></tool-button>
      </div>
      <div class="tree">
        <part-node root icon="part">Sheet Metal.ipt</part-node>
        <part-node>Corps solides</part-node>
        <part-node empty>Corps surfaciques</part-node>
        <part-node empty>Blocs</part-node>
        <part-node>Esquisses</part-node>
        <part-node empty>Esquisses 3D</part-node>
        <part-node empty>Géométrie de constr.</part-node>
        <part-node empty>iContraintes</part-node>
        <part-node last>Paramètres</part-node>
      </div>
      <div class="checks">
        <check-line on><u>A</u>fficher tous les objets</check-line>
        <check-line on>Lier la couleur de la face à partir du composant sourc</check-line>
        <check-line>Lier le formatage de l'esquisse à partir du composant</check-line>
        <check-line on><u>L</u>ier les styles de tôlerie</check-line>
        <check-line on>Utiliser la zone de délimitation minimale orientée</check-line>
      </div>
      <div class="row">
        <value-box value="1,000 nd"><u>F</u>acteur d'échelle</value-box>
        <plane-picker></plane-picker>
      </div>
      <help-button></help-button>
    </tool-window>`);

  /* ---------- application ---------- */

  define("ribbon-bar", `
    :host { font-family: ${UI_FONT}; color: #333; white-space: nowrap; }
    nav { display: flex; height: 20px; padding-left: 1px; background: #dadada; }
    nav button { padding: 0 10px; border: 0; background: none; color: #666; }
    nav .file { padding: 0 9px; background: #ff9f1a; color: #fff; }
    nav .on { padding: 0 9px; background: #f5f5f5; color: #333; }
    nav .on ~ button { padding: 0 9px 0 10px; }
    .panels { display: flex; height: 96px; background: #f5f5f5; border: solid #d5d5d5; border-width: 0 0 1px 1px; }
    section { flex: none; display: flex; flex-direction: column; justify-content: space-between; align-items: center; padding: 6px 6px 4px 4px; border-right: 1px solid #d5d5d5; }
    section.sketch { width: 112px; padding-left: 6px; }
    section.rest { border: 0; padding-left: 5px; color: #999; }
    section > div { display: flex; align-items: flex-start; gap: 6px; }
    .big { display: flex; flex-direction: column; align-items: center; gap: 4px; border: 0; background: none; line-height: 15px; }
    .big small { position: relative; font-size: 12px; }
    .sketch small::after { content: ""; position: absolute; right: -7px; top: 14px; border: 3px solid transparent; border-top-color: #444; border-bottom: 0; }
    .small { display: grid; grid-template-columns: auto auto auto; gap: 8px 11px; padding-top: 1px; }
    .small button { display: flex; align-items: center; gap: 5px; height: 16px; border: 0; background: none; }
  `, () => {
    const tools = [["sweep", "Balayage"], ["emboss", "Gravure"], ["decal", "Décalcomanie"], ["loft", "Lissage"], ["derive", "Dériver"],
      ["import", "Importer"], ["coil", "Hélicoïde"], ["rib", "Nervure"], ["unwrap", "Développement"]];
    return `
      <nav>
        <button class="file">Fichier</button><button>Tôlerie</button><button class="on">Modèle 3D</button><button>Esquisse</button>
        <button>Annoter</button><button>Inspecter</button><button>Outils</button><button>Gérer</button><button>Affic</button>
      </nav>
      <div class="panels">
        <section class="sketch">
          <div><button class="big">${icon("sketch")}<small>Commencer<br>une esquisse 2D</small></button></div>
          <span>Esquisse</span>
        </section>
        <section>
          <div>
            <button class="big">${icon("extrude")}<small>Extrusion</small></button>
            <button class="big">${icon("revolve")}<small>Révolution</small></button>
            <div class="small">${tools.map(([i, t]) => `<button>${icon(i)}${t}</button>`).join("")}</div>
          </div>
          <span>Créer</span>
        </section>
        <section class="rest"><div><button class="big">${icon("shell")}<small>Pe</small></button></div></section>
      </div>`;
  });

  // guides: one letter per 16px level - blank, l line, p plus, m minus, t branch, e last branch
  define("tree-node", `
    :host { display: flex; align-items: center; height: 20px; white-space: nowrap; color: #222; }
    i { flex: none; position: relative; width: 16px; height: 20px; }
    i.l, i.p, i.t, i.e { background: repeating-linear-gradient(#999 0 1px, #0000 1px 3px) 8px 0 / 1px 100% no-repeat; }
    i.e { background-size: 1px 10px; }
    i.t::after, i.e::after { content: ""; position: absolute; left: 9px; top: 10px; width: 8px; border-top: 1px dotted #999; }
    i.p::before, i.m::before { content: ""; position: absolute; left: 4px; top: 9px; width: 9px; height: 2px; background: #333; }
    i.p::before { background: linear-gradient(#888, #888) 0 4px / 9px 2px no-repeat, linear-gradient(#888, #888) 4px 0 / 2px 9px no-repeat, #f5f5f5; height: 9px; top: 6px; }
    svg { margin: 0 3px 0 2px; }
  `, el => `
    ${[...el.attr("guides")].map(g => `<i class="${g}"></i>`).join("")}${icon(el.attr("icon"))}<span><slot></slot></span>`);

  define("model-browser", `
    :host { overflow: hidden; background: #f5f5f5; }
    .tabs { display: flex; align-items: center; gap: 12px; height: 24px; padding-right: 5px; background: #d9d9d9; font-family: ${UI_FONT}; }
    .tabs div { display: flex; align-items: center; gap: 9px; height: 24px; padding: 0 7px 0 4px; background: #f5f5f5; color: #333; margin-right: -5px; }
    .tabs button { border: 0; background: none; }
    .tabs .find { margin-left: auto; }
  `, () => {
    const rows = [["", "part", "Sheet Metal.ipt"], ["p", "folder", "États du modèle: [Principa"], ["m", "model", "Modèle plié"],
      [" p", "bodies", "Corps solides(1)"], [" p", "view", "Vue: [Principale]"], [" m", "open", "Origine"],
      [" lt", "plane", "YZ"], [" lt", "plane", "XZ"], [" lt", "plane", "XY"],
      [" lt", "axis", "Axe X"], [" lt", "axis", "Axe Y"], [" lt", "axis", "Axe Z"], [" le", "point", "Point de centre"], [" p", "face", "Face1"]];
    return `
      <div class="tabs">
        <div>Modèle<button aria-label="Fermer">${icon("cross")}</button></div>
        <button aria-label="Ajouter">${icon("plus")}</button>
        <button class="find" aria-label="Rechercher">${icon("search")}</button>
        <button aria-label="Menu">${icon("menu")}</button>
      </div>
      ${rows.map(([g, i, t]) => `<tree-node guides="${g}" icon="${i}">${t}</tree-node>`).join("")}`;
  });

  define("cad-app", `
    :host { position: relative; overflow: hidden; }
    .work { position: relative; display: flex; background: linear-gradient(#a0aec5, #bbc6d8); }
    model-browser { width: 179px; flex: none; padding-bottom: 1px; margin-bottom: -5px; border-right: 1px solid #ccc; }
    mirror-window { position: absolute; left: 186px; top: 0; width: 295px; }
    .frame { position: absolute; left: 37px; top: 131px; width: 67px; height: 76px; border: 3px solid #ff4545; border-radius: 10px; }
    .arrow { position: absolute; left: 0; top: 0; filter: drop-shadow(1px 5px 2px #0006); }
    .side { position: absolute; inset: 0 0 0 auto; width: 28px; background: linear-gradient(90deg, #fff0, #fff); }
    .foot { position: absolute; inset: auto 0 0; height: 20px; background: linear-gradient(#fff0, #fff); }
  `, () => `
    <ribbon-bar></ribbon-bar>
    <div class="work">
      <model-browser></model-browser>
      <mirror-window></mirror-window>
      <div class="frame"></div>
      <svg class="arrow" width="520" height="300" viewBox="0 116 520 300" aria-hidden="true">
        <path d="M109 293C230 314 400 326 419 264" fill="none" stroke="#ff4545" stroke-width="3"/>
        <path d="M414 263L421 254L425 264Z" fill="#ff4545"/>
      </svg>
    </div>
    <div class="side"></div>
    <div class="foot"></div>`);

  define("help-board", `
    :host { display: grid; grid-template-columns: minmax(0, 1090fr) minmax(0, 315fr); gap: 32px; align-items: start; padding-right: 9px; }
    .upper, .lower { display: flex; align-items: flex-start; }
    cad-app { flex: 520 1 0; min-width: 0; }
    components-window { flex: 553 1 0; min-width: 0; margin: 15px 0 0 17px; }
    .lower { margin-top: 50px; padding: 0 13px 0 1px; }
    rect-window { flex: 297 1 0; min-width: 0; }
    circular-window { flex: 334 1 0; min-width: 0; margin: 0 18px 0 59px; }
    derived-window { flex: 368 1 0; min-width: 0; }
    part-window { margin-top: 5px; }
  `, () => `
    <div>
      <div class="upper"><cad-app></cad-app><components-window></components-window></div>
      <div class="lower"><rect-window></rect-window><circular-window></circular-window><derived-window></derived-window></div>
    </div>
    <part-window></part-window>`);
</script>
</body>
</html>
